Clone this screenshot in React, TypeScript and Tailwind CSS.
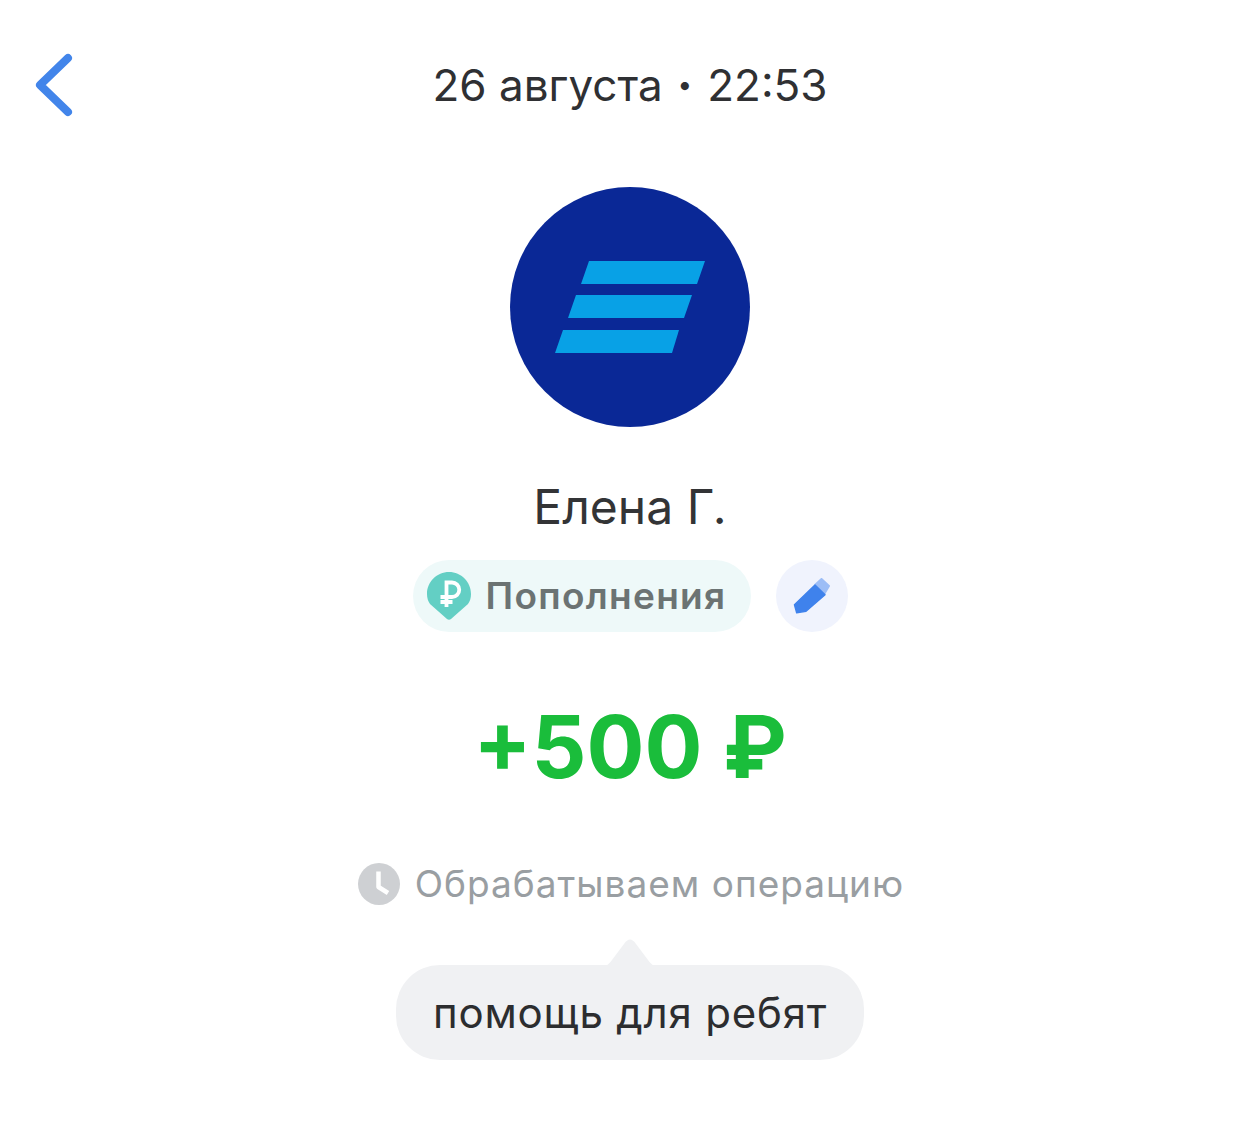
import { useState } from "react";

function BackIcon() {
  return (
    <svg viewBox="0 0 38 64" className="w-[38px] h-[64px]" fill="none">
      <path d="M33 5 L5 32 L33 59" stroke="#4285ea" strokeWidth="8" strokeLinecap="round" strokeLinejoin="round" />
    </svg>
  );
}

function BankLogo() {
  return (
    <svg viewBox="0 0 240 240" className="w-[240px] h-[240px]">
      <circle cx="120" cy="120" r="120" fill="#0a2896" />
      <polygon points="79,74 195,74 187,97 71,97" fill="#08a1e6" />
      <polygon points="66,108 182,108 174,131 58,131" fill="#08a1e6" />
      <polygon points="53,143 169,143 162,166 45,166" fill="#08a1e6" />
    </svg>
  );
}

function PinIcon() {
  return (
    <svg viewBox="0 0 44 48" className="w-[44px] h-[48px]">
      <path d="M22 0 C34.2 0 44 9.8 44 22 C44 26 43 29 41 32 L24 47 C23 48 21 48 20 47 L3 32 C1 29 0 26 0 22 C0 9.8 9.8 0 22 0 Z" fill="#63cfc4" />
      <path d="M19.5 35 V10.5 H25 A7.2 7.2 0 0 1 25 25 H13.5 M13.5 30 H25.5" fill="none" stroke="#fff" strokeWidth="3.8" />
    </svg>
  );
}

function PencilIcon() {
  return (
    <svg viewBox="0 0 38 36" className="w-[38px] h-[36px]">
      <path d="M22.5 6.5 L28.5 1 L36 8 L31.5 15.5 Z" fill="#9cbdf6" stroke="#9cbdf6" strokeWidth="2" strokeLinejoin="round" />
      <path d="M22 7 L32 16.7 L13 33.3 L3.7 34.7 L1.5 26.7 Z" fill="#3f82ec" stroke="#3f82ec" strokeWidth="1.5" strokeLinejoin="round" />
    </svg>
  );
}

function ClockIcon() {
  return (
    <svg viewBox="0 0 42 42" className="w-[42px] h-[42px]">
      <circle cx="21" cy="21" r="21" fill="#ced0d3" />
      <path d="M20.5 8.5 V24 L30 30" fill="none" stroke="#fff" strokeWidth="4.5" strokeLinejoin="round" />
    </svg>
  );
}

export default function App() {
  const [comment] = useState("помощь для ребят");

  return (
    <div className="w-[1260px] h-[1137px] bg-white font-['Inter',sans-serif] flex flex-col items-center">
      <header className="w-full grid grid-cols-[1fr_auto_1fr] items-center px-[35px] pt-[53px]">
        <BackIcon />
        <span className="text-[44px] leading-[64px] text-[#2f3033] flex items-center gap-[15px]">
          <span>26 августа</span>
          <span className="text-[26px]">•</span>
          <span>22:53</span>
        </span>
        <span />
      </header>

      <div className="mt-[70px]">
        <BankLogo />
      </div>

      <h1 className="mt-[50px] text-[48px] leading-[60px] text-[#333436]">Елена Г.</h1>

      <div className="mt-[23px] flex items-center gap-[25px]">
        <div className="w-[338px] h-[72px] rounded-full bg-[#eef9f9] flex items-center pl-[14px] gap-[15px]">
          <PinIcon />
          <span className="text-[37px] tracking-[1.3px] font-semibold text-[#6b7373]">Пополнения</span>
        </div>
        <button className="w-[72px] h-[72px] rounded-full bg-[#f0f3fd] flex items-center justify-center">
          <PencilIcon />
        </button>
      </div>

      <div className="mt-[64px] text-[86px] leading-[102px] font-bold text-[#1abd3b]">+500 ₽</div>

      <div className="mt-[64px] flex items-center gap-[15px] pl-[2px]">
        <ClockIcon />
        <span className="text-[37px] tracking-[1px] leading-[44px] text-[#999ea2]">Обрабатываем операцию</span>
      </div>

      <div className="relative mt-[59px] w-[468px] h-[95px] rounded-[44px] bg-[#f0f1f3] flex items-center justify-center">
        <svg viewBox="0 0 60 30" className="absolute left-[204px] top-[-27px] w-[60px] h-[30px]">
          <path d="M0 30 C6 29 9 26 12 22 L24 6 C28 0 32 0 36 6 L48 22 C51 26 54 29 60 30 Z" fill="#f0f1f3" />
        </svg>
        <span className="text-[42px] tracking-[0.8px] text-[#2c2d2f]">{comment}</span>
      </div>
    </div>
  );
}
